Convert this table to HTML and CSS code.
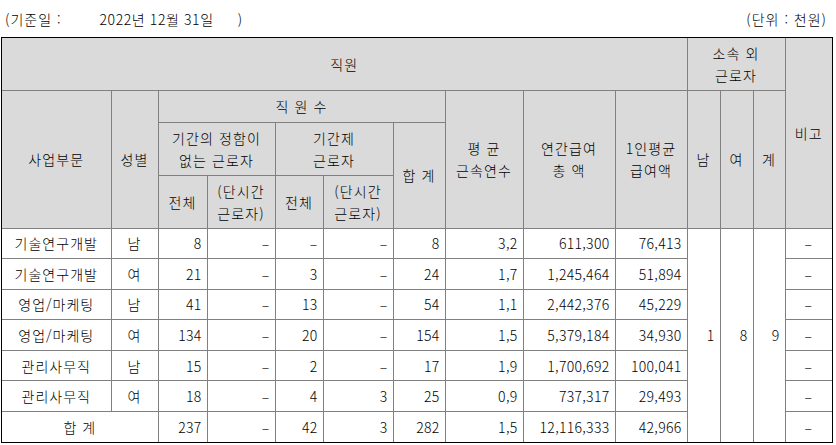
FILE: index.html
```html
<!DOCTYPE html>
<html lang="ko">
<head>
<meta charset="utf-8">
<link rel="stylesheet" href="styles.css">
</head>
<body>
<div class="topline">
  <div class="date">
    <span>(기준일 :</span>
    <span class="day">2022년 12월 31일</span>
    <span class="close">)</span>
  </div>
  <span class="unit">(단위 : 천원)</span>
</div>
<div class="frame">
<table class="grid">
  <colgroup>
    <col class="c109"><col class="c47"><col class="c49"><col class="c68"><col class="c48"><col class="c70"><col class="c52"><col class="c78"><col class="c92"><col class="c72"><col class="c33"><col class="c33"><col class="c32"><col class="c47">
  </colgroup>
  <thead>
    <tr class="hr1">
      <th colspan="10">직원</th>
      <th colspan="3">소속 외<br>근로자</th>
      <th rowspan="4">비고</th>
    </tr>
    <tr class="hr2">
      <th rowspan="3">사업부문</th>
      <th rowspan="3">성별</th>
      <th colspan="5">직 원 수</th>
      <th rowspan="3">평 균<br>근속연수</th>
      <th rowspan="3">연간급여<br>총 액</th>
      <th rowspan="3">1인평균<br>급여액</th>
      <th rowspan="3">남</th>
      <th rowspan="3">여</th>
      <th rowspan="3">계</th>
    </tr>
    <tr class="hr3">
      <th colspan="2">기간의 정함이<br>없는 근로자</th>
      <th colspan="2">기간제<br>근로자</th>
      <th rowspan="2">합 계</th>
    </tr>
    <tr class="hr4">
      <th>전체</th>
      <th>(단시간<br>근로자)</th>
      <th>전체</th>
      <th>(단시간<br>근로자)</th>
    </tr>
  </thead>
  <tbody>
    <tr class="br">
      <td class="ctr">기술연구개발</td><td class="ctr">남</td>
      <td class="num">8</td><td class="num">–</td><td class="num">–</td><td class="num">–</td><td class="num">8</td>
      <td class="num">3,2</td><td class="num">611,300</td><td class="num">76,413</td>
      <td class="num" rowspan="7">1</td><td class="num" rowspan="7">8</td><td class="num" rowspan="7">9</td>
      <td class="ctr">–</td>
    </tr>
    <tr class="br">
      <td class="ctr">기술연구개발</td><td class="ctr">여</td>
      <td class="num">21</td><td class="num">–</td><td class="num">3</td><td class="num">–</td><td class="num">24</td>
      <td class="num">1,7</td><td class="num">1,245,464</td><td class="num">51,894</td>
      <td class="ctr">–</td>
    </tr>
    <tr class="br">
      <td class="ctr">영업/마케팅</td><td class="ctr">남</td>
      <td class="num">41</td><td class="num">–</td><td class="num">13</td><td class="num">–</td><td class="num">54</td>
      <td class="num">1,1</td><td class="num">2,442,376</td><td class="num">45,229</td>
      <td class="ctr">–</td>
    </tr>
    <tr class="br">
      <td class="ctr">영업/마케팅</td><td class="ctr">여</td>
      <td class="num">134</td><td class="num">–</td><td class="num">20</td><td class="num">–</td><td class="num">154</td>
      <td class="num">1,5</td><td class="num">5,379,184</td><td class="num">34,930</td>
      <td class="ctr">–</td>
    </tr>
    <tr class="br">
      <td class="ctr">관리사무직</td><td class="ctr">남</td>
      <td class="num">15</td><td class="num">–</td><td class="num">2</td><td class="num">–</td><td class="num">17</td>
      <td class="num">1,9</td><td class="num">1,700,692</td><td class="num">100,041</td>
      <td class="ctr">–</td>
    </tr>
    <tr class="br">
      <td class="ctr">관리사무직</td><td class="ctr">여</td>
      <td class="num">18</td><td class="num">–</td><td class="num">4</td><td class="num">3</td><td class="num">25</td>
      <td class="num">0,9</td><td class="num">737,317</td><td class="num">29,493</td>
      <td class="ctr">–</td>
    </tr>
    <tr class="br">
      <td class="ctr" colspan="2">합 계</td>
      <td class="num">237</td><td class="num">–</td><td class="num">42</td><td class="num">3</td><td class="num">282</td>
      <td class="num">1,5</td><td class="num">12,116,333</td><td class="num">42,966</td>
      <td class="ctr">–</td>
    </tr>
  </tbody>
</table>
</div>
</body>
</html>
```

FILE: styles.css
```css
html, body {
  margin: 0;
  padding: 0;
  background: #ffffff;
}
body {
  font-family: "Noto Sans CJK KR", "Noto Sans", sans-serif;
  font-size: 14px;
  font-weight: 300;
  color: #000000;
}
.topline {
  display: flex;
  justify-content: space-between;
  align-items: center;
  height: 37px;
  padding: 0 9px 0 5px;
  box-sizing: border-box;
  letter-spacing: 1px;
}
.date {
  display: flex;
  align-items: center;
}
.day {
  margin-left: 38px;
  letter-spacing: 0.6px;
}
.close {
  margin-left: 24px;
}
.frame {
  margin-left: 1px;
  width: 832px;
  box-sizing: border-box;
  border: 1px solid #000000;
}
.grid {
  width: 830px;
  table-layout: fixed;
  border-collapse: collapse;
  border-style: hidden;
}
.grid th,
.grid td {
  border: 1px solid #808080;
  padding: 0 5px;
  line-height: 22px;
  vertical-align: middle;
  overflow: hidden;
  white-space: nowrap;
}
.grid th {
  background: #dadada;
  font-weight: 300;
  text-align: center;
  letter-spacing: 1.1px;
}
.hr1 { height: 52px; }
.hr2 { height: 32px; }
.hr3 { height: 53px; }
.hr4 { height: 53px; }
.br { height: 30.6px; }
.num {
  text-align: right;
  letter-spacing: 0.3px;
}
.ctr {
  text-align: center;
  letter-spacing: 1px;
}
.c109 { width: 109px; }
.c47 { width: 47px; }
.c49 { width: 49px; }
.c68 { width: 68px; }
.c48 { width: 48px; }
.c70 { width: 70px; }
.c52 { width: 52px; }
.c78 { width: 78px; }
.c92 { width: 92px; }
.c72 { width: 72px; }
.c33 { width: 33px; }
.c32 { width: 32px; }
```
